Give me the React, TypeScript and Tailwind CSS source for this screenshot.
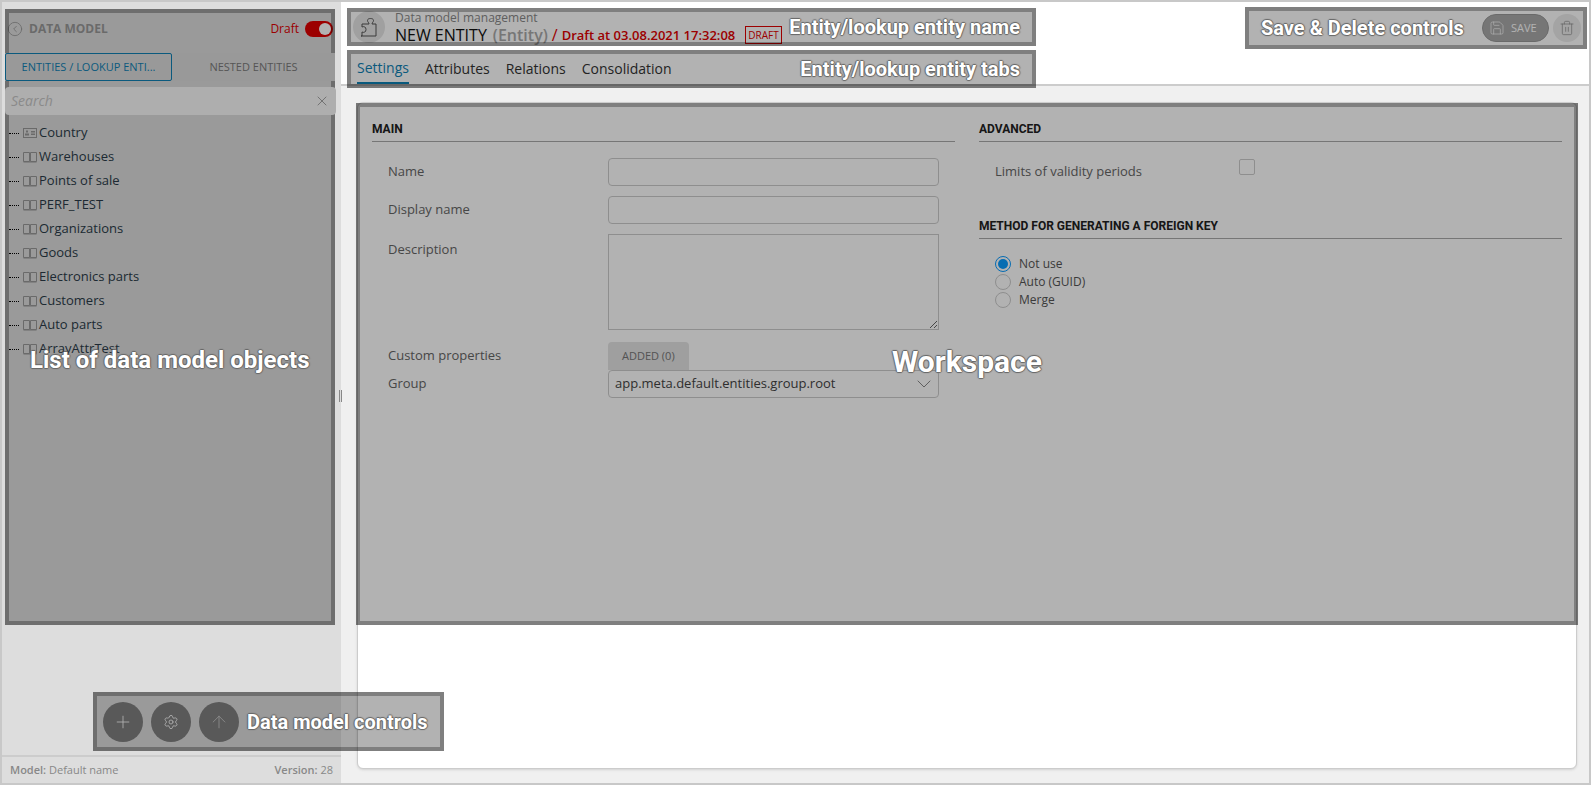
import { ArrowUp, ChevronDown, CircleChevronLeft, Plus, Save, Settings, Trash2, X } from "lucide-react";
import type { ReactNode } from "react";

const entities = ["Warehouses", "Points of sale", "PERF_TEST", "Organizations", "Goods", "Electronics parts", "Customers", "Auto parts", "ArrayAttrTest"];

const labelClass = "z-10 font-['Roboto',sans-serif] font-bold text-white [text-shadow:1px_0_1px_#666,-1px_0_1px_#666,0_1px_1px_#666,0_-1px_1px_#666]";

// grey annotation frame laid over a part of the page
const Callout = ({ className, children }: { className: string; children: ReactNode }) => (
  <div className={`relative ${className}`}>
    {children}
    <div className="pointer-events-none absolute inset-0 border-4 border-black/50 bg-black/30 bg-clip-padding" />
  </div>
);

const PuzzleIcon = () => (
  <svg viewBox="0 0 20 20" className="h-5 w-5 fill-none stroke-[#555]">
    <path d="M2 19H17V7H13C13 5.5 14.5 5 14.5 3.5C14.5 2 13 1.5 11.5 1.5C10 1.5 8.5 2 8.5 3.5C8.5 5 10 5.5 10 7H3V10C5 9 7 10 7 12.5C7 15 5 16 3 15V19Z" />
  </svg>
);

const BookIcon = () => (
  <svg viewBox="0 0 14 12" className="h-3 w-3.5 shrink-0 fill-none stroke-[#999]">
    <path d="M.5 1.5h6v9h-6zM7.5 1.5h6v9h-6zM.5 11h13" />
  </svg>
);

const CardIcon = () => (
  <svg viewBox="0 0 14 12" className="h-3 w-3.5 shrink-0">
    <rect x="0.5" y="1.5" width="13" height="9" className="fill-none stroke-[#999]" />
    <path d="M3 3.5h2v2H3zM2 6.5h4v2H2zM8 4h4v1.5H8zM8 6.5h4V8H8z" className="fill-[#999]" />
  </svg>
);

const TreeRow = ({ name, icon }: { name: string; icon: ReactNode }) => (
  <div className="flex h-6 items-center">
    <div className="mr-1 w-2.5 border-t border-dotted border-black" />
    {icon}
    <span className="ml-0.5 text-[13px] text-[#2b3c49]">{name}</span>
  </div>
);

const Field = ({ label, children, className = "items-center", labelPadding = "" }: { label: string; children: ReactNode; className?: string; labelPadding?: string }) => (
  <div className={`flex px-4 ${className}`}>
    <div className={`w-55 shrink-0 text-[13px] text-[#666] ${labelPadding}`}>{label}</div>
    {children}
  </div>
);

const SectionTitle = ({ title, className = "" }: { title: string; className?: string }) => (
  <div className={`border-b border-[#aaa] pb-0.5 font-['Roboto',sans-serif] text-xs font-bold leading-5 text-[#222] ${className}`}>{title}</div>
);

const Radio = ({ label, checked }: { label: string; checked?: boolean }) => (
  <div className="flex h-4.5 items-center gap-2 text-xs text-[#555]">
    <span className={`flex h-4 w-4 items-center justify-center rounded-full border ${checked ? "border-[#0a9cff]" : "border-[#ccc]"}`}>
      {checked && <span className="h-2.5 w-2.5 rounded-full bg-[#0a9cff]" />}
    </span>
    {label}
  </div>
);

export default function App() {
  return (
    <div className="relative flex h-screen overflow-hidden border-2 border-[#c8c8c8] bg-white font-['Open_Sans',sans-serif]">
      {/* left panel */}
      <aside className="relative z-10 flex w-[339px] shrink-0 flex-col bg-[#ddd]">
        <Callout className="ml-[3px] mr-1.5 mt-[7px] h-[616px]">
          <div className="mb-4 flex items-center justify-between pl-0.5 pr-0.5 pt-3">
            <div className="flex items-center gap-1.5">
              <CircleChevronLeft className="h-4 w-4 text-[#999]" strokeWidth={1.25} />
              <span className="text-xs font-bold text-[#999]">DATA MODEL</span>
            </div>
            <div className="flex items-center gap-1.5">
              <span className="text-xs text-[#e00000]">Draft</span>
              <div className="flex h-4 w-7 items-center justify-end rounded-full bg-[#e00000] pr-0.5">
                <div className="h-3 w-3 rounded-full bg-white" />
              </div>
            </div>
          </div>
          {/* tabs and search sit above the frame */}
          <div className="relative z-10 flex h-7 bg-[#999] text-[11px]">
            <div className="flex w-[167px] items-center justify-center rounded-xs border border-[#0b5a7e] text-[#0b5a7e]">ENTITIES / LOOKUP ENTI...</div>
            <div className="flex flex-1 items-center justify-center text-[#555]">NESTED ENTITIES</div>
          </div>
          <div className="relative z-10 -mr-px mt-1.5 flex h-7 items-center justify-between rounded-sm bg-[#aeaeae] px-1.5">
            <span className="text-sm italic text-[#8a8a8a]">Search</span>
            <X className="h-4 w-4 text-[#666]" strokeWidth={1.25} />
          </div>
          <div className="mt-1.5 pl-1">
            <TreeRow name="Country" icon={<CardIcon />} />
            {entities.map((name) => (
              <TreeRow key={name} name={name} icon={<BookIcon />} />
            ))}
          </div>
        </Callout>
        <div className={`${labelClass} absolute left-7 top-[342px] text-2xl`}>List of data model objects</div>

        <div className="mt-auto flex h-7 items-center justify-between border-t-2 border-[#ccc] pl-2 pr-2 text-[11px] text-[#888]">
          <span><b className="font-semibold">Model:</b> Default name</span>
          <span><b className="font-semibold">Version:</b> 28</span>
        </div>
      </aside>

      {/* floating controls */}
      <Callout className="!absolute bottom-8 left-[91px] z-30 flex h-[59px] w-[351px] items-center gap-2 pl-2.5">
        <button className="flex h-10 w-10 items-center justify-center rounded-full bg-[#808080] text-white"><Plus className="h-5 w-5" strokeWidth={1} /></button>
        <button className="flex h-10 w-10 items-center justify-center rounded-full bg-[#808080] text-white"><Settings className="h-4 w-4" strokeWidth={1.25} /></button>
        <button className="flex h-10 w-10 items-center justify-center rounded-full bg-[#808080] text-[#ccc]"><ArrowUp className="h-5 w-5" strokeWidth={1} /></button>
        <span className={`${labelClass} relative text-xl`}>Data model controls</span>
      </Callout>

      {/* resize handle */}
      <div className="absolute left-[337px] top-[388px] z-20 flex h-3 gap-px">
        <div className="w-px bg-[#888]" />
        <div className="w-px bg-[#888]" />
      </div>

      <main className="flex min-w-0 flex-1 flex-col bg-[#f0f0f0]">
        <header className="relative z-10 flex h-[84px] shrink-0 justify-between border-b-2 border-[#ccc] bg-white pl-1.5 pr-0.5">
          <div className="flex w-[689px] flex-col gap-1 pt-1.5">
            <Callout className="flex h-[38px] shrink-0 items-center justify-between pl-1.5 pr-4">
              <div className="mt-0.5 flex items-center gap-2.5">
                <div className="-mt-0.5 flex h-8 w-8 items-center justify-center rounded-full bg-[#e6e6e6]">
                  <PuzzleIcon />
                </div>
                <div>
                  <div className="text-xs leading-3.5 text-[#888]">Data model management</div>
                  <div className="flex items-center gap-1 whitespace-nowrap">
                    <span className="mr-0.5 text-base/5 text-[#111]">NEW ENTITY</span>
                    <span className="text-base/5 font-semibold text-[#aaa]">(Entity)</span>
                    <span className="text-base/5 text-[#e00000]">/</span>
                    <span className="text-[13px]/5 font-semibold text-[#e00000]">Draft at 03.08.2021 17:32:08</span>
                    <span className="ml-1.5 border border-[#e00000] px-0.5 text-[10px] leading-4 text-[#e00000]">DRAFT</span>
                  </div>
                </div>
              </div>
              <span className={`${labelClass} relative text-xl`}>Entity/lookup entity name</span>
            </Callout>
            <Callout className="flex h-[38px] shrink-0 items-center justify-between pl-2.5 pr-4">
              <nav className="mt-1 flex gap-4 self-start text-sm text-[#333]">
                <span className="flex h-7.5 items-center border-b-2 border-[#0f81b4] text-[#0f81b4]">Settings</span>
                <span className="flex h-7.5 items-center">Attributes</span>
                <span className="flex h-7.5 items-center">Relations</span>
                <span className="flex h-7.5 items-center">Consolidation</span>
              </nav>
              <span className={`${labelClass} relative text-xl`}>Entity/lookup entity tabs</span>
            </Callout>
          </div>
          <Callout className="mt-[5px] flex h-[42px] w-[342px] items-center justify-between pl-4 pr-1.5">
            <span className={`${labelClass} relative text-xl`}>Save &amp; Delete controls</span>
            <div className="flex items-center gap-1">
              <button className="flex h-7 w-[67px] items-center gap-1.5 rounded-full border border-[#999] bg-[#aaa] pl-1.5 text-[11px] text-white">
                <Save className="h-4 w-4" strokeWidth={1} />SAVE
              </button>
              <button className="flex h-7 w-7 items-center justify-center rounded-full bg-[#ebebeb] text-[#888]">
                <Trash2 className="h-4 w-4" strokeWidth={1} />
              </button>
            </div>
          </Callout>
        </header>

        <div className="flex min-h-0 flex-1 flex-col pb-3.5 pl-4 pr-3 pt-4">
          <div className="flex flex-1 flex-col rounded-md border border-[#ccc] bg-white shadow-sm">
            <Callout className="-mx-0.5 h-[522px] shrink-0">
              <div className="grid grid-cols-2 gap-6 px-4 pt-4">
                <div>
                  <SectionTitle title="MAIN" />
                  <div className="mt-4 flex flex-col gap-2.5">
                    <Field label="Name">
                      <input className="h-7 flex-1 rounded border border-[#ccc]" />
                    </Field>
                    <Field label="Display name">
                      <input className="h-7 flex-1 rounded border border-[#ccc]" />
                    </Field>
                    <Field label="Description" className="items-start" labelPadding="pt-1.5">
                      <textarea className="h-24 flex-1 border border-[#ccc]" />
                    </Field>
                  </div>
                  <div className="mt-3">
                    <Field label="Custom properties">
                      <button className="h-7 rounded-t bg-[#e4e4e4] px-3.5 text-[11px] text-[#777]">ADDED (0)</button>
                    </Field>
                    <Field label="Group">
                      <div className="flex h-7 flex-1 items-center justify-between rounded border border-[#ccc] pl-1.5 pr-0.5 text-[13px] text-[#444]">
                        app.meta.default.entities.group.root
                        <ChevronDown className="h-6 w-6 text-[#888]" strokeWidth={1} />
                      </div>
                    </Field>
                  </div>
                </div>
                <div>
                  <SectionTitle title="ADVANCED" />
                  <div className="mt-4 flex h-7 items-center px-4">
                    <div className="w-61 shrink-0 text-[13px] text-[#666]">Limits of validity periods</div>
                    <div className="-mt-2.5 h-4 w-4 rounded-xs border border-[#ccc]" />
                  </div>
                  <SectionTitle title="METHOD FOR GENERATING A FOREIGN KEY" className="mt-7.5" />
                  <div className="mt-4 flex flex-col px-4">
                    <Radio label="Not use" checked />
                    <Radio label="Auto (GUID)" />
                    <Radio label="Merge" />
                  </div>
                </div>
              </div>
              <div className={`${labelClass} absolute left-[536px] top-[241px] text-3xl`}>Workspace</div>
            </Callout>
          </div>
        </div>
      </main>
    </div>
  );
}
